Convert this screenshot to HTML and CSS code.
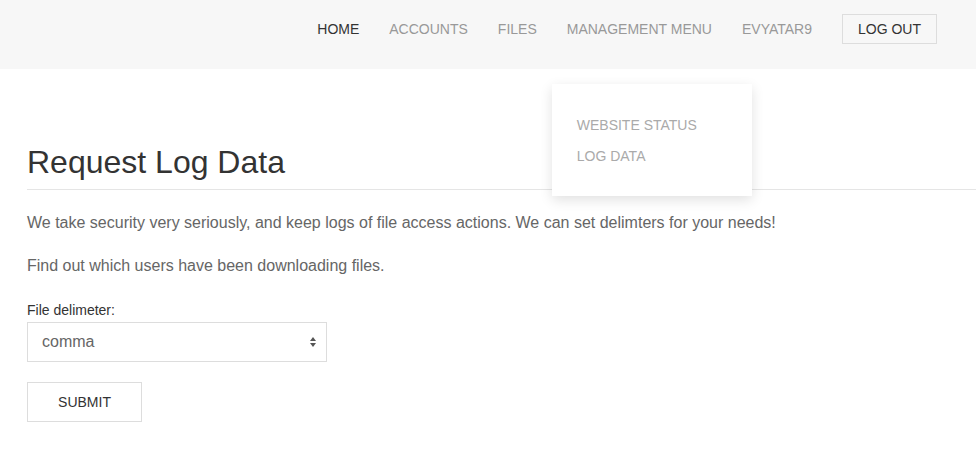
FILE: index.html
```html
<!DOCTYPE html>
<html>
<head>
<meta charset="utf-8">
<link rel="stylesheet" href="styles.css">
</head>
<body>
<header class="topbar">
  <nav class="nav">
    <a class="nav-link active" href="#">HOME</a>
    <a class="nav-link" href="#">ACCOUNTS</a>
    <a class="nav-link" href="#">FILES</a>
    <div class="nav-drop">
      <a class="nav-link" href="#">MANAGEMENT MENU</a>
      <div class="drop-menu">
        <a class="drop-item" href="#">WEBSITE STATUS</a>
        <a class="drop-item" href="#">LOG DATA</a>
      </div>
    </div>
    <a class="nav-link" href="#">EVYATAR9</a>
    <a class="nav-btn" href="#">LOG OUT</a>
  </nav>
</header>
<main class="content">
  <h1 class="title">Request Log Data</h1>
  <p class="text">We take security very seriously, and keep logs of file access actions. We can set delimters for your needs!</p>
  <p class="text">Find out which users have been downloading files.</p>
  <form class="form">
    <label class="label">File delimeter:</label>
    <div class="select">
      <span class="select-value">comma</span>
      <svg class="select-arrows" width="8" height="12" viewBox="0 0 8 12"><path d="M4 1 L7 5 L1 5 Z" fill="#555"/><path d="M4 11 L7 7 L1 7 Z" fill="#555"/></svg>
    </div>
    <button class="submit" type="button">SUBMIT</button>
  </form>
</main>
</body>
</html>
```
FILE: styles.css
```css
* { box-sizing: border-box; }
body {
  margin: 0;
  font-family: "Liberation Sans", Arial, sans-serif;
  background: #fff;
  color: #666;
}
.topbar {
  background: #f7f7f7;
  height: 69px;
  display: flex;
  justify-content: flex-end;
  align-items: flex-start;
  padding: 14px 39px 0 0;
}
.nav {
  display: flex;
  align-items: center;
  height: 30px;
}
.nav-link {
  font-size: 14px;
  color: #999;
  text-decoration: none;
  margin: 0 15px;
  line-height: 30px;
  display: block;
}
.nav-link.active { color: #333; }
.nav-drop { position: relative; }
.drop-menu {
  position: absolute;
  left: 0;
  top: 70px;
  width: 200px;
  height: 112px;
  background: #fff;
  box-shadow: 0 4px 12px rgba(0,0,0,0.12);
  padding: 32px 25px 0;
  display: flex;
  flex-direction: column;
  gap: 13px;
  z-index: 5;
}
.drop-item {
  font-size: 14px;
  color: #aaa;
  text-decoration: none;
  line-height: 18px;
}
.nav-btn {
  margin-left: 15px;
  font-size: 14px;
  color: #333;
  text-decoration: none;
  border: 1px solid #ddd;
  height: 30px;
  line-height: 28px;
  padding: 0 15px;
  display: block;
}
.content {
  padding: 0 0 0 27px;
}
.title {
  margin: 74px 0 0;
  font-size: 32px;
  font-weight: normal;
  color: #333;
  line-height: 38px;
  padding-bottom: 8px;
  border-bottom: 1px solid #e5e5e5;
}
.text {
  font-size: 16px;
  line-height: 22px;
  margin: 22px 0 0;
  color: #666;
}
.text + .text { margin-top: 21px; }
.form {
  margin-top: 24px;
  display: flex;
  flex-direction: column;
  align-items: flex-start;
}
.label {
  font-size: 14px;
  color: #333;
  line-height: 18px;
}
.select {
  margin-top: 3px;
  width: 300px;
  height: 40px;
  border: 1px solid #ddd;
  display: flex;
  align-items: center;
  justify-content: space-between;
  padding: 0 9px 0 14px;
}
.select-value { font-size: 16px; color: #666; }
.submit {
  margin-top: 20px;
  width: 115px;
  height: 40px;
  background: #fff;
  border: 1px solid #ddd;
  font-family: "Liberation Sans", Arial, sans-serif;
  font-size: 14px;
  color: #333;
}
```
